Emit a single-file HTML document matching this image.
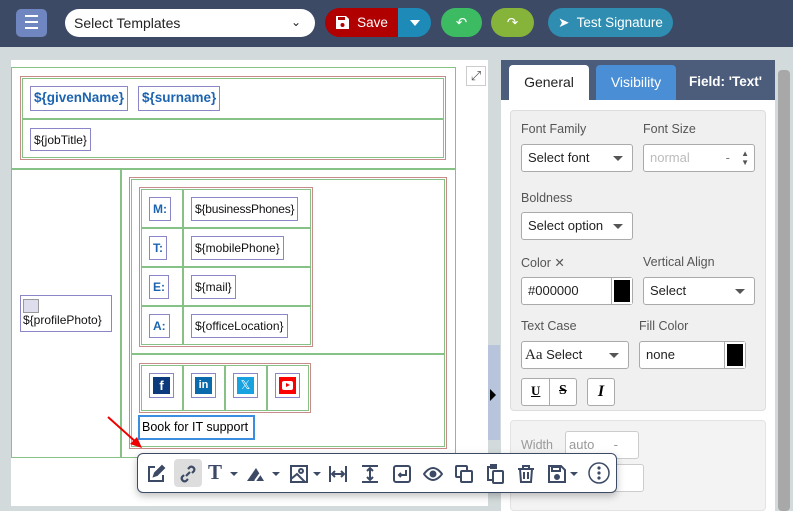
<!DOCTYPE html><html><head><style>
*{box-sizing:border-box;margin:0;padding:0}
body{width:793px;height:511px;overflow:hidden;background:#d3dadb;font-family:"Liberation Sans",sans-serif;position:relative;font-size:13px}
.a{position:absolute}
.hdr{left:0;top:0;width:793px;height:47px;background:#3d4a66}
.btn{position:absolute;top:8px;height:29px;border-radius:15px;color:#fff;font-size:13.5px;display:flex;align-items:center;justify-content:center}
.g{border:2px solid #86c186}
.r{border:1px solid #c98a8a}
.f{border:1px solid #8b86c8;background:#fff;position:absolute;font-size:12px;padding:0 3px;line-height:22px;color:#111;white-space:nowrap}
.lab{color:#1d64b0;font-weight:bold}
.pl{position:absolute;color:#555;font-size:12.5px}
.inp{position:absolute;background:#fff;border:1px solid #aaa;border-radius:3px;height:28px;font-size:13px;line-height:26px;padding-left:6px;color:#222;white-space:nowrap}
.tri{position:absolute;right:9px;top:11px;border-left:5px solid transparent;border-right:5px solid transparent;border-top:5px solid #555}
.tb svg{position:absolute;top:10px}
</style></head><body>
<div class="a hdr"></div>
<div class="a" style="left:16px;top:9px;width:31px;height:28px;background:#6f86c0;border-radius:5px"></div>
<div class="a" style="left:25px;top:15px;width:13px;height:2px;background:#fff;box-shadow:0 6px 0 #fff,0 12px 0 #fff"></div>
<div class="a" style="left:65px;top:9px;width:250px;height:28px;background:#fff;border-radius:14px;font-size:14px;line-height:28px;padding-left:9px;color:#222">Select Templates<span style="position:absolute;right:14px;top:-1px;font-size:12px">&#8964;</span></div>
<div class="btn" style="left:325px;width:73px;background:#b00000;border-radius:15px 0 0 15px"><svg width="15" height="15" viewBox="0 0 15 15" style="margin-right:7px"><path d="M1 1h10l3 3v10H1z" fill="#fff"/><rect x="3" y="2" width="7" height="3" fill="#b00000"/><circle cx="7.5" cy="10" r="2" fill="#b00000"/></svg>Save</div>
<div class="btn" style="left:398px;width:33px;background:#1e8ab8;border-radius:0 15px 15px 0"><span style="border-left:5px solid transparent;border-right:5px solid transparent;border-top:6px solid #fff"></span></div>
<div class="btn" style="left:441px;width:41px;background:#3dbb63">&#8630;</div>
<div class="btn" style="left:491px;width:43px;background:#86b43a">&#8631;</div>
<div class="btn" style="left:548px;width:125px;background:#2e8db0">&#10148;&nbsp; Test Signature</div>

<div class="a" style="left:11px;top:60px;width:477px;height:446px;background:#fff"></div>
<div class="a" style="left:466px;top:66px;width:20px;height:20px;border:1px solid #ccc;font-size:13px;color:#555;text-align:center;line-height:18px">⤢</div>
<div class="a g" style="left:11px;top:67px;width:445px;height:103px;border-width:1px"></div>
<div class="a r" style="left:20px;top:76px;width:426px;height:84px"></div>
<div class="a g" style="left:22px;top:78px;width:422px;height:80px;border-width:1px"></div>
<div class="a" style="left:22px;top:118px;width:422px;height:2px;background:#86c186"></div>
<div class="f lab" style="left:30px;top:86px;height:25px;font-size:13.5px">${givenName}</div>
<div class="f lab" style="left:138px;top:86px;height:25px;font-size:13.5px">${surname}</div>
<div class="f" style="left:30px;top:128px;height:23px">${jobTitle}</div>

<div class="a g" style="left:11px;top:168px;width:445px;height:290px;border-width:1px"></div>
<div class="a" style="left:11px;top:168px;width:445px;height:2px;background:#86c186"></div>
<div class="a" style="left:120px;top:168px;width:2px;height:290px;background:#86c186"></div>
<div class="f" style="left:20px;top:295px;width:92px;height:37px;line-height:15px;padding-top:3px;font-size:12px;padding-left:2px"><span style="display:block;width:16px;height:14px;border:1px solid #999;background:#dde"></span>${profilePhoto}</div>
<div class="a r" style="left:129px;top:177px;width:318px;height:272px"></div>
<div class="a g" style="left:131px;top:179px;width:314px;height:268px;border-width:1px"></div>
<div class="a" style="left:131px;top:353px;width:314px;height:2px;background:#86c186"></div>
<div class="a r" style="left:139px;top:187px;width:174px;height:160px"></div>
<div class="a g" style="left:141px;top:189px;width:170px;height:156px;border-width:1px"></div>
<div class="a" style="left:182px;top:189px;width:2px;height:156px;background:#86c186"></div>
<div class="a" style="left:141px;top:227px;width:170px;height:2px;background:#86c186"></div>
<div class="a" style="left:141px;top:266px;width:170px;height:2px;background:#86c186"></div>
<div class="a" style="left:141px;top:305px;width:170px;height:2px;background:#86c186"></div>
<div class="f lab" style="left:149px;top:197px">M:</div>
<div class="f lab" style="left:149px;top:236px">T:</div>
<div class="f lab" style="left:149px;top:275px">E:</div>
<div class="f lab" style="left:149px;top:314px">A:</div>
<div class="f" style="left:191px;top:197px;letter-spacing:-0.2px">${businessPhones}</div>
<div class="f" style="left:191px;top:236px">${mobilePhone}</div>
<div class="f" style="left:191px;top:275px">${mail}</div>
<div class="f" style="left:191px;top:314px">${officeLocation}</div>
<div class="a r" style="left:139px;top:363px;width:172px;height:50px"></div>
<div class="a g" style="left:141px;top:365px;width:168px;height:46px;border-width:1px"></div>
<div class="a" style="left:182px;top:365px;width:2px;height:46px;background:#86c186"></div>
<div class="a" style="left:224px;top:365px;width:2px;height:46px;background:#86c186"></div>
<div class="a" style="left:266px;top:365px;width:2px;height:46px;background:#86c186"></div>
<div class="f" style="left:149px;top:373px;width:25px;height:25px;padding:3px"><div style="background:#0d3a7d;width:17px;height:17px;color:#fff;font-weight:bold;text-align:center;line-height:18px;font-size:13px">f</div></div>
<div class="f" style="left:191px;top:373px;width:25px;height:25px;padding:3px"><div style="background:#0b6aab;width:17px;height:17px;color:#fff;font-weight:bold;text-align:center;line-height:17px;font-size:11px">in</div></div>
<div class="f" style="left:233px;top:373px;width:25px;height:25px;padding:3px"><div style="background:#18a2e0;width:17px;height:17px;color:#fff;text-align:center;line-height:17px;font-size:12px">𝕏</div></div>
<div class="f" style="left:275px;top:373px;width:25px;height:25px;padding:3px"><div style="background:#f00;width:17px;height:17px;position:relative"><div style="position:absolute;left:3px;top:4px;width:11px;height:9px;background:#fff;border-radius:2px"></div><div style="position:absolute;left:7px;top:6px;border-left:4px solid #f00;border-top:2.5px solid transparent;border-bottom:2.5px solid transparent"></div></div></div>
<div class="a" style="left:138px;top:415px;width:117px;height:25px;border:2px solid #3b8de0;background:#fff;font-size:12.5px;line-height:21px;padding-left:2px;white-space:nowrap">Book for IT support</div>
<svg class="a" style="left:100px;top:410px" width="50" height="50"><line x1="8" y1="7" x2="37" y2="33" stroke="#e00" stroke-width="2"/><path d="M42 38 L30 34 L37 27 Z" fill="#e00"/></svg>
<div class="a" style="left:488px;top:345px;width:12px;height:95px;background:#b8c4dc"></div>
<div class="a" style="left:490px;top:389px;border-left:6px solid #000;border-top:6px solid transparent;border-bottom:6px solid transparent"></div>

<div class="a" style="left:501px;top:60px;width:274px;height:451px;background:#fff"></div>
<div class="a" style="left:501px;top:60px;width:274px;height:40px;background:#4c5d7c"></div>
<div class="a" style="left:509px;top:65px;width:80px;height:35px;background:#fff;border-radius:4px 4px 0 0;text-align:center;line-height:35px;font-size:14px;color:#222">General</div>
<div class="a" style="left:596px;top:65px;width:80px;height:35px;background:#4a8fd6;border-radius:4px 4px 0 0;text-align:center;line-height:35px;font-size:14px;color:#fff">Visibility</div>
<div class="a" style="left:689px;top:74px;font-size:13.5px;color:#fff;font-weight:bold">Field: 'Text'</div>
<div class="a" style="left:775px;top:47px;width:18px;height:464px;background:#d3dadb"></div>
<div class="a" style="left:778px;top:70px;width:12px;height:441px;background:#a8a8a8;border-radius:4px"></div>
<div class="a" style="left:510px;top:110px;width:256px;height:301px;background:#f0f0f0;border:1px solid #ddd;border-radius:4px"></div>
<div class="pl" style="left:521px;top:122px">Font Family</div>
<div class="pl" style="left:643px;top:122px">Font Size</div>
<div class="inp" style="left:521px;top:144px;width:112px">Select font<span class="tri"></span></div>
<div class="inp" style="left:643px;top:144px;width:112px;color:#bbb">normal<span style="position:absolute;right:24px;color:#777">-</span><span style="position:absolute;right:5px;top:0;font-size:8px;line-height:9px;color:#555;padding-top:4px">▲<br>▼</span></div>
<div class="pl" style="left:521px;top:191px">Boldness</div>
<div class="inp" style="left:521px;top:212px;width:112px">Select option<span class="tri"></span></div>
<div class="pl" style="left:521px;top:255px">Color ✕</div>
<div class="pl" style="left:643px;top:255px">Vertical Align</div>
<div class="inp" style="left:521px;top:277px;width:112px">#000000<span style="position:absolute;right:0;top:0;width:21px;height:26px;border-left:1px solid #aaa;background:#fff;padding:2px"><span style="display:block;width:16px;height:22px;background:#000"></span></span></div>
<div class="inp" style="left:643px;top:277px;width:112px">Select<span class="tri"></span></div>
<div class="pl" style="left:521px;top:319px">Text Case</div>
<div class="pl" style="left:639px;top:319px">Fill Color</div>
<div class="inp" style="left:521px;top:341px;width:108px;padding-left:3px"><span style="font-family:'Liberation Serif',serif;font-size:15px">Aa</span> Select<span class="tri"></span></div>
<div class="inp" style="left:639px;top:341px;width:107px">none<span style="position:absolute;right:0;top:0;width:21px;height:26px;border-left:1px solid #aaa;background:#fff;padding:2px"><span style="display:block;width:16px;height:22px;background:#000"></span></span></div>
<div class="a" style="left:521px;top:378px;width:56px;height:28px;background:#fff;border:1px solid #aaa;border-radius:3px"></div>
<div class="a" style="left:549px;top:378px;width:1px;height:28px;background:#aaa"></div>
<div class="a" style="left:531px;top:383px;font-family:'Liberation Serif',serif;font-weight:bold;text-decoration:underline;font-size:13px">U</div>
<div class="a" style="left:559px;top:383px;font-family:'Liberation Serif',serif;font-weight:bold;text-decoration:line-through;font-size:14px">S</div>
<div class="a" style="left:587px;top:378px;width:28px;height:28px;background:#fff;border:1px solid #aaa;border-radius:3px;font-family:'Liberation Serif',serif;font-weight:bold;font-style:italic;font-size:16px;text-align:center;line-height:26px">I</div>
<div class="a" style="left:510px;top:420px;width:256px;height:91px;background:#f3f3f3;border:1px solid #e3e3e3;border-radius:4px"></div>
<div class="pl" style="left:521px;top:438px;color:#999">Width</div>
<div class="inp" style="left:565px;top:431px;width:74px;color:#999;border-color:#ccc;padding-left:3px">auto<span style="position:absolute;right:20px">-</span></div>
<div class="inp" style="left:565px;top:464px;width:79px;border-color:#ccc"></div>

<div class="a tb" style="left:137px;top:453px;width:480px;height:40px;background:#fff;border:1px solid #3d4a66;border-radius:6px;box-shadow:0 3px 8px rgba(0,0,0,.25)">
<div class="a" style="left:36px;top:5px;width:28px;height:28px;background:#ddd;border-radius:4px"></div>
<svg style="left:8px" width="20" height="20" viewBox="0 0 20 20" fill="none" stroke="#3d4a66" stroke-width="2"><path d="M9 3H3v14h14v-6"/><path d="M8 12l1-3 7-7 2 2-7 7z" fill="#3d4a66"/></svg>
<svg style="left:40px" width="20" height="20" viewBox="0 0 20 20" fill="none" stroke="#3d4a66" stroke-width="2.2"><path d="M8 12l4-4"/><path d="M10 5l2-2a3 3 0 014 4l-2 2M10 15l-2 2a3 3 0 01-4-4l2-2"/></svg>
<div class="a" style="left:70px;top:6px;font-family:'Liberation Serif',serif;font-weight:bold;font-size:21px;color:#3d4a66">T</div><div class="a" style="left:92px;top:18px;border-left:4px solid transparent;border-right:4px solid transparent;border-top:4px solid #3d4a66"></div>
<svg style="left:108px" width="26" height="20" viewBox="0 0 26 20"><path d="M1 17L10 4l8 13z" fill="#3d4a66"/><path d="M9 17l5-7" stroke="#fff" stroke-width="2"/></svg><div class="a" style="left:134px;top:18px;border-left:4px solid transparent;border-right:4px solid transparent;border-top:4px solid #3d4a66"></div>
<svg style="left:151px" width="20" height="20" viewBox="0 0 20 20" fill="none" stroke="#3d4a66" stroke-width="2"><rect x="2" y="2" width="16" height="16"/><circle cx="12" cy="7" r="2"/><path d="M2 15l6-5 8 8"/></svg><div class="a" style="left:175px;top:18px;border-left:4px solid transparent;border-right:4px solid transparent;border-top:4px solid #3d4a66"></div>
<svg style="left:190px" width="20" height="20" viewBox="0 0 20 20" fill="none" stroke="#3d4a66" stroke-width="2"><path d="M2 2v16M18 2v16M5 10h10M7 7l-3 3 3 3M13 7l3 3-3 3"/></svg>
<svg style="left:222px" width="20" height="20" viewBox="0 0 20 20" fill="none" stroke="#3d4a66" stroke-width="2"><path d="M2 2h16M2 18h16M10 5v10M7 7l3-3 3 3M7 13l3 3 3-3"/></svg>
<svg style="left:254px" width="20" height="20" viewBox="0 0 20 20" fill="none" stroke="#3d4a66" stroke-width="2"><rect x="2" y="2" width="16" height="16" rx="2"/><path d="M14 6v5H7M9 9l-2 2 2 2"/></svg>
<svg style="left:285px" width="20" height="20" viewBox="0 0 20 20" fill="none" stroke="#3d4a66" stroke-width="2"><path d="M1 10s4-6 9-6 9 6 9 6-4 6-9 6-9-6-9-6z"/><circle cx="10" cy="10" r="2.5" fill="#3d4a66"/></svg>
<svg style="left:316px" width="20" height="20" viewBox="0 0 20 20" fill="none" stroke="#3d4a66" stroke-width="2"><rect x="2" y="2" width="11" height="11" rx="1"/><rect x="7" y="7" width="11" height="11" rx="1" fill="#fff"/></svg>
<svg style="left:347px" width="20" height="20" viewBox="0 0 20 20" fill="none" stroke="#3d4a66" stroke-width="2"><path d="M12 3H3v13h4"/><rect x="8" y="7" width="10" height="12" rx="1"/><rect x="6" y="1" width="5" height="3" fill="#3d4a66"/></svg>
<svg style="left:378px" width="20" height="20" viewBox="0 0 20 20" fill="none" stroke="#3d4a66" stroke-width="2"><path d="M2 5h16M7 5V2h6v3M4 5l1 13h10l1-13M8 8v7M12 8v7"/></svg>
<svg style="left:409px" width="20" height="20" viewBox="0 0 20 20" fill="none" stroke="#3d4a66" stroke-width="2"><path d="M2 2h12l4 4v12H2z"/><rect x="5" y="3" width="8" height="4"/><circle cx="10" cy="13" r="2" fill="#3d4a66"/></svg><div class="a" style="left:432px;top:18px;border-left:4px solid transparent;border-right:4px solid transparent;border-top:4px solid #3d4a66"></div>
<svg style="left:450px;top:8px" width="22" height="22" viewBox="0 0 22 22" fill="#3d4a66"><circle cx="11" cy="11" r="10" fill="none" stroke="#3d4a66" stroke-width="1.5"/><circle cx="11" cy="6" r="1.6"/><circle cx="11" cy="11" r="1.6"/><circle cx="11" cy="16" r="1.6"/></svg>
</div>
</body></html>
